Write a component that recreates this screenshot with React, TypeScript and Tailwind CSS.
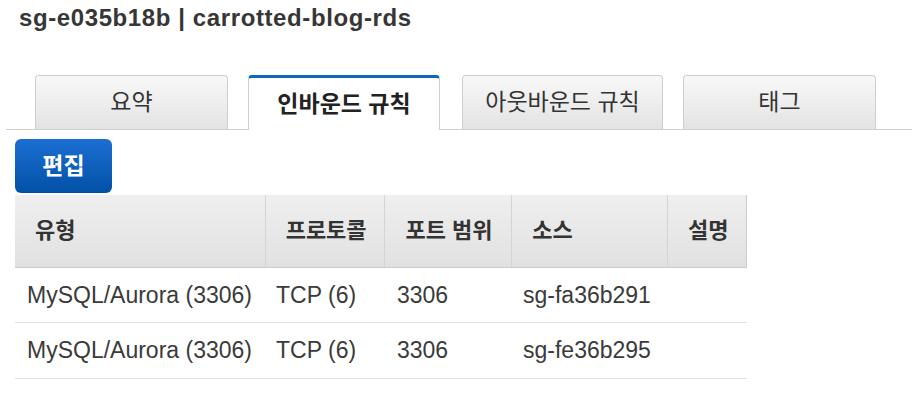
import React from 'react';

const font = "font-['Liberation_Sans','Noto_Sans_CJK_KR',sans-serif]";

const tabs = [
  { label: '요약', width: 'w-[193px]', ml: 'ml-0', active: false },
  { label: '인바운드 규칙', width: 'w-[192px]', ml: 'ml-[20px]', active: true },
  { label: '아웃바운드 규칙', width: 'w-[201px]', ml: 'ml-[22px]', active: false },
  { label: '태그', width: 'w-[193px]', ml: 'ml-[20px]', active: false },
];

const columns = [
  { label: '유형', width: 'w-[250px]' },
  { label: '프로토콜', width: 'w-[120px]' },
  { label: '포트 범위', width: 'w-[127px]' },
  { label: '소스', width: 'w-[156px]' },
  { label: '설명', width: 'w-[79px]' },
];

const rules = [
  { type: 'MySQL/Aurora (3306)', protocol: 'TCP (6)', port: '3306', source: 'sg-fa36b291', desc: '' },
  { type: 'MySQL/Aurora (3306)', protocol: 'TCP (6)', port: '3306', source: 'sg-fe36b295', desc: '' },
];

export default function App() {
  return (
    <div className={`w-[912px] h-[402px] bg-white overflow-hidden text-[#333] ${font}`}>
      {/* title */}
      <h1 className="pl-[19px] pt-[4px] text-[24px] leading-[28px] font-bold tracking-[0.6px] text-[#363636]">
        sg-e035b18b | carrotted-blog-rds
      </h1>

      {/* tabs */}
      <div className="mt-[43px] ml-[6px] pl-[29px] flex items-end border-b border-[#cfcfcf]">
        {tabs.map((t) => (
          <div
            key={t.label}
            className={`${t.width} ${t.ml} flex items-center justify-center rounded-t-[4px] border border-b-0 text-[23px] leading-none ${
              t.active
                ? '-mb-px h-[55px] bg-white border-[#cfcfcf] border-t-[3px] border-t-[#1166bb] font-bold text-[#222]'
                : 'h-[54px] bg-gradient-to-b from-[#f8f8f8] to-[#e3e3e3] border-[#cfcfcf] text-[#333]'
            }`}
          >
            {t.label}
          </div>
        ))}
      </div>

      {/* edit button */}
      <button className="mt-[9px] ml-[15px] w-[97px] h-[54px] rounded-[6px] bg-gradient-to-b from-[#1b6fd1] to-[#0251a8] text-white text-[23px] font-bold leading-none">
        편집
      </button>

      {/* rules table */}
      <div className="mt-[2px] ml-[15px] w-[732px]">
        <div className="flex h-[73px] bg-gradient-to-b from-[#efefef] to-[#e1e1e1] border-b border-r border-[#cccccc]">
          {columns.map((c, i) => (
            <div
              key={c.label}
              className={`${c.width} flex items-center pl-[20px] text-[22px] font-bold leading-none text-[#333] ${
                i > 0 ? 'border-l border-[#d4d4d4]' : ''
              }`}
            >
              {c.label}
            </div>
          ))}
        </div>
        {rules.map((r, i) => (
          <div
            key={i}
            className={`flex items-center border-b border-[#e2e2e2] text-[23px] leading-none text-[#3a3a3a] ${
              i === 0 ? 'h-[55px]' : 'h-[56px]'
            }`}
          >
            <div className="w-[250px] pl-[12px]">{r.type}</div>
            <div className="w-[120px] pl-[11px]">{r.protocol}</div>
            <div className="w-[127px] pl-[12px]">{r.port}</div>
            <div className="w-[156px] pl-[11px]">{r.source}</div>
            <div className="w-[79px] pl-[11px]">{r.desc}</div>
          </div>
        ))}
      </div>
    </div>
  );
}
